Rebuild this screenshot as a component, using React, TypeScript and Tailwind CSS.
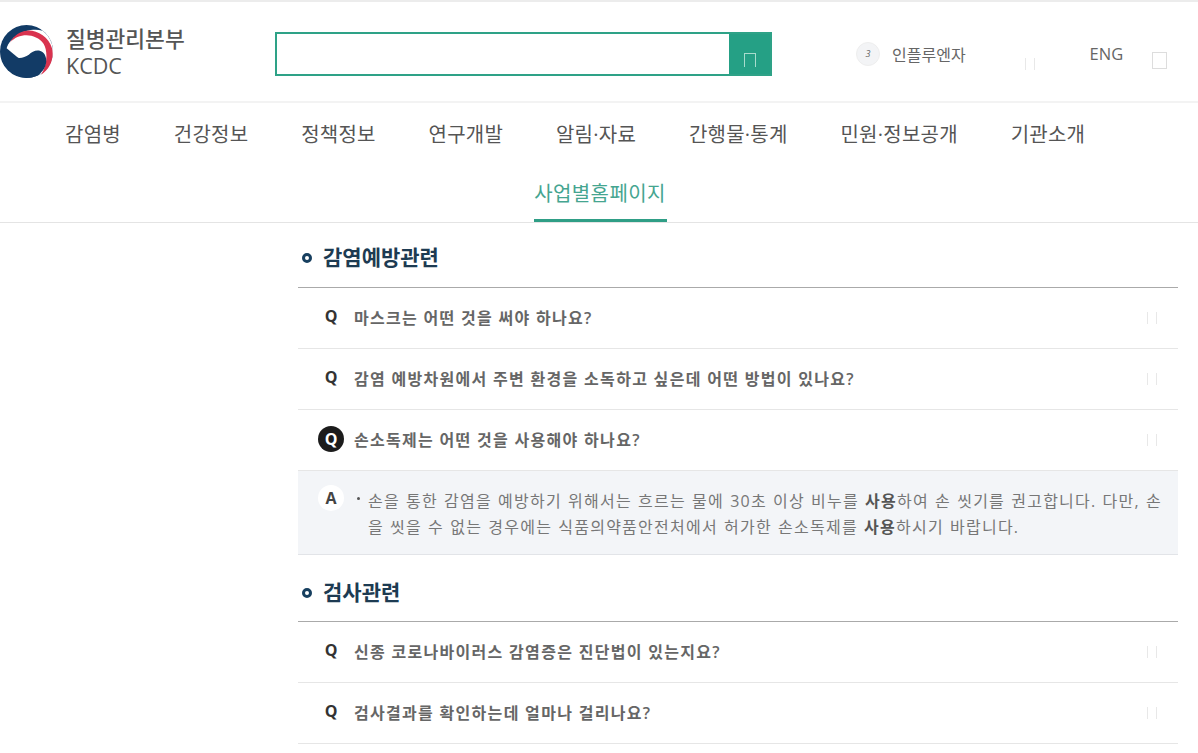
const navItems = ["감염병", "건강정보", "정책정보", "연구개발", "알림·자료", "간행물·통계", "민원·정보공개", "기관소개"];

function Logo() {
  return (
    <svg width="53" height="53" viewBox="-2 15 160 160" className="shrink-0">
      <circle cx="78" cy="95" r="80" fill="#123b66" />
      <path d="M18 85C30 45 85 20 127 32A80 80 0 0 1 115 166Z" fill="#fff" />
      <path d="M28 68C55 38 105 38 130 72C142 92 142 135 122 165C150 148 162 115 155 85C145 50 110 30 80 32C60 33 40 45 28 68Z" fill="#d9334f" />
      <path d="M0 95L22 90C28 115 62 122 85 105C100 88 130 85 137 115C140 135 132 150 115 166A80 80 0 0 1 0 95Z" fill="#123b66" />
    </svg>
  );
}

// broken icon glyphs in the page show up as thin empty marks
function FaintMarks({ className }: { className: string }) {
  return <span className={`block h-3 w-[10px] border-x border-[#e8e8e8] ${className}`} />;
}

function Row({ text, active }: { text: string; active?: boolean }) {
  return (
    <div className="flex h-[61px] items-center border-b border-[#e6e6e6] pr-[21px]">
      <span className="flex w-[56px] shrink-0 justify-center pl-[10px]">
        {active ? (
          <span className="flex h-[26px] w-[26px] -translate-y-[1px] items-center justify-center rounded-full bg-[#1c1c1c] text-[16px] font-bold text-white">Q</span>
        ) : (
          <span className="-mt-[4px] text-[16px] font-bold text-[#333]">Q</span>
        )}
      </span>
      <span className="flex-1 text-[16px] font-semibold tracking-[1.3px] text-[#666]">{text}</span>
      <FaintMarks className="" />
    </div>
  );
}

function SectionTitle({ text, className }: { text: string; className: string }) {
  return (
    <div className={`flex items-center gap-[11px] border-b border-[#aaa] pl-[4px] ${className}`}>
      <span className="h-[10px] w-[10px] rounded-full border-[3px] border-[#173f5f]" />
      <span className="text-[21px] font-bold text-[#1d3b52]">{text}</span>
    </div>
  );
}

export default function App() {
  return (
    <div className="h-[753px] w-[1198px] overflow-hidden bg-white font-['Open_Sans','Noto_Sans_CJK_KR',sans-serif]">
      <header className="flex h-[103px] items-center border-y-2 border-t-[#ececec] border-b-[#f3f3f3] pt-[4px]">
        <div className="-mt-[4px] flex w-[275px] items-center gap-[13px]">
          <Logo />
          <div className="text-[21.5px] leading-[27px] text-[#555]">
            <div className="font-medium">질병관리본부</div>
            <div>KCDC</div>
          </div>
        </div>
        <div className="flex h-[44px] w-[497px] border-2 border-[#2ea287]">
          <div className="flex-1" />
          <div className="flex w-[41px] items-end justify-center bg-[#25a085] pb-[7px]">
            <span className="h-[14px] w-[12px] border-x border-t border-[#a8dccd]" />
          </div>
        </div>
        <div className="ml-[84px] flex h-[24px] w-[24px] items-center justify-center rounded-full border border-[#eee] bg-[#f3f4f6] text-[9px] text-[#666] italic">3</div>
        <span className="ml-[12px] translate-y-[1px] text-[16px] text-[#666]">인플루엔자</span>
        <FaintMarks className="mt-[20px] ml-[59px]" />
        <span className="ml-[55px] translate-y-[1px] text-[16.5px] text-[#666]">ENG</span>
        <span className="mt-[13px] ml-[29px] h-[17px] w-[15px] border border-[#ddd]" />
      </header>

      <nav className="border-b border-[#e4e4e4]">
        <div className="flex h-[60px] items-center gap-[52.8px] pt-[4px] pl-[65px] text-[20px] tracking-[0.25px] text-[#555]">
          {navItems.map((item) => (
            <span key={item}>{item}</span>
          ))}
        </div>
        <div className="flex justify-center pl-[2px]">
          <span className="h-[59px] w-[133px] border-b-[3px] border-[#2f9e86] pt-[14px] text-center text-[20px] leading-[34px] tracking-[0.4px] text-[#45a590]">
            사업별홈페이지
          </span>
        </div>
      </nav>

      <main className="ml-[298px] w-[880px]">
        <SectionTitle text="감염예방관련" className="h-[65px] pt-[6px]" />
        <Row text="마스크는 어떤 것을 써야 하나요?" />
        <Row text="감염 예방차원에서 주변 환경을 소독하고 싶은데 어떤 방법이 있나요?" />
        <Row text="손소독제는 어떤 것을 사용해야 하나요?" active />
        <div className="flex h-[84px] border-b border-[#e2e4e8] bg-[#f3f5f8] pt-[14px]">
          <span className="ml-[20px] flex h-[26px] w-[26px] shrink-0 items-center justify-center rounded-full bg-white text-[16px] font-bold text-[#444]">A</span>
          <span className="mt-[12px] ml-[13px] h-[3px] w-[3px] shrink-0 rounded-full bg-[#555]" />
          <p className="mt-[3px] ml-[8px] text-[16px] leading-[26px] tracking-[1.25px] [word-spacing:0.7px] whitespace-nowrap text-[#777]">
            손을 통한 감염을 예방하기 위해서는 흐르는 물에 30초 이상 비누를 <b className="font-bold text-[#555]">사용</b>하여 손 씻기를 권고합니다. 다만, 손
            <br />
            을 씻을 수 없는 경우에는 식품의약품안전처에서 허가한 손소독제를 <b className="font-bold text-[#555]">사용</b>하시기 바랍니다.
          </p>
        </div>
        <SectionTitle text="검사관련" className="h-[67px] pt-[9px]" />
        <Row text="신종 코로나바이러스 감염증은 진단법이 있는지요?" />
        <Row text="검사결과를 확인하는데 얼마나 걸리나요?" />
      </main>
    </div>
  );
}
